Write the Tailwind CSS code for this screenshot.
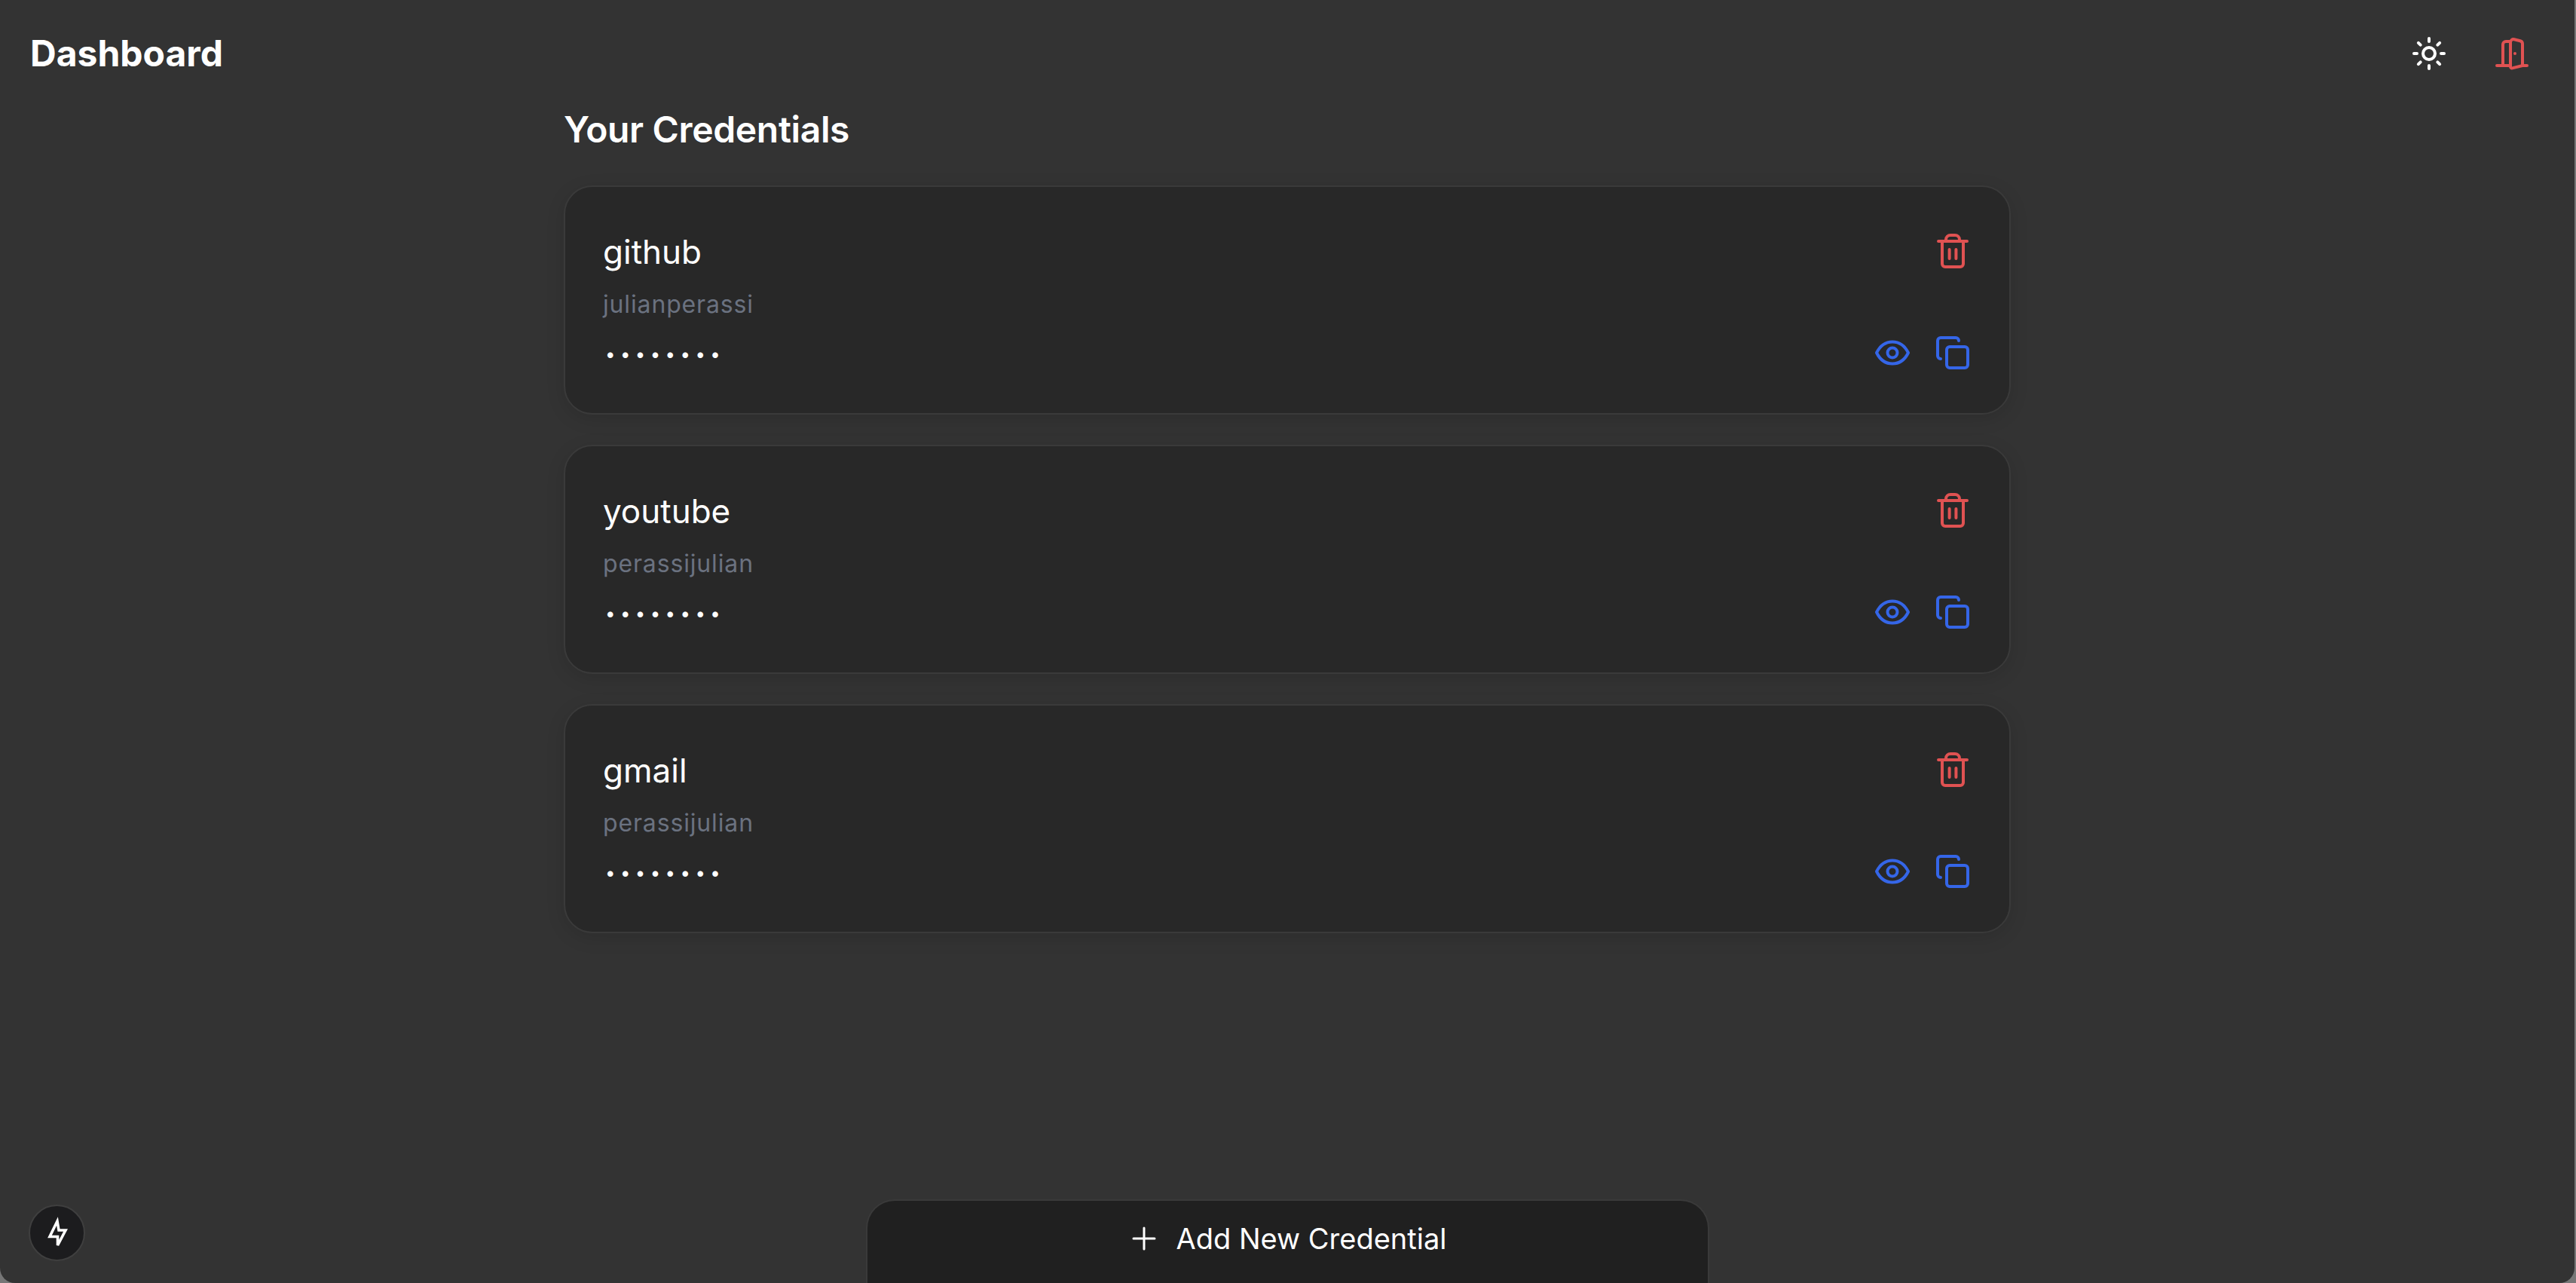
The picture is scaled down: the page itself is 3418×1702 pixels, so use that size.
<!DOCTYPE html>
<html lang="en">
<head>
  <meta charset="UTF-8" />
  <title>Dashboard</title>
  <script src="https://cdn.jsdelivr.net/npm/@tailwindcss/browser@4"></script>
</head>
<body class="h-screen overflow-hidden bg-[#767676] font-[Inter,sans-serif] text-white antialiased">
<div class="relative h-full w-[3416px] overflow-hidden rounded-b-[20px] bg-[#333333]">

  <header class="flex h-[142px] items-center justify-between pl-[40px] pr-[59px]">
    <h1 class="text-[48px] font-bold leading-none">Dashboard</h1>
    <div class="flex items-center gap-[62px]">
      <svg class="h-[48px] w-[48px] text-white" viewBox="0 0 24 24" fill="none" stroke="currentColor" stroke-width="2" stroke-linecap="round" stroke-linejoin="round">
        <circle cx="12" cy="12" r="4" />
        <path d="M12 2v2M12 20v2M4.93 4.93l1.41 1.41M17.66 17.66l1.41 1.41M2 12h2M20 12h2M6.34 17.66l-1.41 1.41M19.07 4.93l-1.41 1.41" />
      </svg>
      <svg class="h-[48px] w-[48px] -scale-x-100 text-[#e05252]" viewBox="0 0 24 24" fill="none" stroke="currentColor" stroke-width="2" stroke-linecap="round" stroke-linejoin="round">
        <path d="M13 4h3a2 2 0 0 1 2 2v14M2 20h3M13 20h9M10 12v.01M13 4.562v16.157a1 1 0 0 1-1.242.97L5 20V5.562a2 2 0 0 1 1.515-1.94l4-1A2 2 0 0 1 13 4.561Z" />
      </svg>
    </div>
  </header>

  <main class="mx-auto w-[1920px]">
    <h2 class="mb-[44px] text-[48px] font-semibold leading-[60px] tracking-[-0.35px]">Your Credentials</h2>

    <div class="flex flex-col gap-[40px]">
      <!-- github -->
      <div class="flex h-[304px] justify-between rounded-[38px] border-2 border-[#3a3a3a] bg-[#282828] pb-[56px] pl-[50px] pr-[51px] pt-[60px] shadow-[0_6px_24px_rgba(0,0,0,0.12)]">
        <div class="flex flex-col">
          <span class="text-[44px] leading-[52px]">github</span>
          <span class="mt-[24px] text-[32px] leading-[40px] tracking-[0.85px] text-[#6b7280]">julianperassi</span>
          <span class="ml-[3px] mt-[26px] text-[24px] leading-[40px] tracking-[6.4px]">••••••••</span>
        </div>
        <div class="flex flex-col items-end justify-between">
          <svg class="mt-[1px] h-[48px] w-[48px] text-[#e05252]" viewBox="0 0 24 24" fill="none" stroke="currentColor" stroke-width="2" stroke-linecap="round" stroke-linejoin="round">
            <path d="M2.5 5.5h19M5 5.5v15a2 2 0 0 0 2 2h10a2 2 0 0 0 2-2v-15M7.5 5.5v-1a3 3 0 0 1 3-3h3a3 3 0 0 1 3 3v1M9.8 11v6M14.2 11v6" />
          </svg>
          <div class="flex items-center gap-[32px]">
            <svg class="h-[48px] w-[48px] text-[#3566e8]" viewBox="0 0 24 24" fill="none" stroke="currentColor" stroke-width="2" stroke-linecap="round" stroke-linejoin="round">
              <path d="M1.5 12C3.5 8 7 4.75 12 4.75S20.5 8 22.5 12c-2 4-5.5 7.25-10.5 7.25S3.5 16 1.5 12Z" />
              <circle cx="12" cy="12" r="3.25" />
            </svg>
            <svg class="h-[48px] w-[48px] text-[#3566e8]" viewBox="0 0 24 24" fill="none" stroke="currentColor" stroke-width="2" stroke-linecap="round" stroke-linejoin="round">
              <rect x="8" y="8" width="14" height="14" rx="2" />
              <path d="M4 16c-1.1 0-2-.9-2-2V4c0-1.1.9-2 2-2h10c1.1 0 2 .9 2 2" />
            </svg>
          </div>
        </div>
      </div>

      <!-- youtube -->
      <div class="flex h-[304px] justify-between rounded-[38px] border-2 border-[#3a3a3a] bg-[#282828] pb-[56px] pl-[50px] pr-[51px] pt-[60px] shadow-[0_6px_24px_rgba(0,0,0,0.12)]">
        <div class="flex flex-col">
          <span class="text-[44px] leading-[52px]">youtube</span>
          <span class="mt-[24px] text-[32px] leading-[40px] tracking-[0.85px] text-[#6b7280]">perassijulian</span>
          <span class="ml-[3px] mt-[26px] text-[24px] leading-[40px] tracking-[6.4px]">••••••••</span>
        </div>
        <div class="flex flex-col items-end justify-between">
          <svg class="mt-[1px] h-[48px] w-[48px] text-[#e05252]" viewBox="0 0 24 24" fill="none" stroke="currentColor" stroke-width="2" stroke-linecap="round" stroke-linejoin="round">
            <path d="M2.5 5.5h19M5 5.5v15a2 2 0 0 0 2 2h10a2 2 0 0 0 2-2v-15M7.5 5.5v-1a3 3 0 0 1 3-3h3a3 3 0 0 1 3 3v1M9.8 11v6M14.2 11v6" />
          </svg>
          <div class="flex items-center gap-[32px]">
            <svg class="h-[48px] w-[48px] text-[#3566e8]" viewBox="0 0 24 24" fill="none" stroke="currentColor" stroke-width="2" stroke-linecap="round" stroke-linejoin="round">
              <path d="M1.5 12C3.5 8 7 4.75 12 4.75S20.5 8 22.5 12c-2 4-5.5 7.25-10.5 7.25S3.5 16 1.5 12Z" />
              <circle cx="12" cy="12" r="3.25" />
            </svg>
            <svg class="h-[48px] w-[48px] text-[#3566e8]" viewBox="0 0 24 24" fill="none" stroke="currentColor" stroke-width="2" stroke-linecap="round" stroke-linejoin="round">
              <rect x="8" y="8" width="14" height="14" rx="2" />
              <path d="M4 16c-1.1 0-2-.9-2-2V4c0-1.1.9-2 2-2h10c1.1 0 2 .9 2 2" />
            </svg>
          </div>
        </div>
      </div>

      <!-- gmail -->
      <div class="flex h-[304px] justify-between rounded-[38px] border-2 border-[#3a3a3a] bg-[#282828] pb-[56px] pl-[50px] pr-[51px] pt-[60px] shadow-[0_6px_24px_rgba(0,0,0,0.12)]">
        <div class="flex flex-col">
          <span class="text-[44px] leading-[52px]">gmail</span>
          <span class="mt-[24px] text-[32px] leading-[40px] tracking-[0.85px] text-[#6b7280]">perassijulian</span>
          <span class="ml-[3px] mt-[26px] text-[24px] leading-[40px] tracking-[6.4px]">••••••••</span>
        </div>
        <div class="flex flex-col items-end justify-between">
          <svg class="mt-[1px] h-[48px] w-[48px] text-[#e05252]" viewBox="0 0 24 24" fill="none" stroke="currentColor" stroke-width="2" stroke-linecap="round" stroke-linejoin="round">
            <path d="M2.5 5.5h19M5 5.5v15a2 2 0 0 0 2 2h10a2 2 0 0 0 2-2v-15M7.5 5.5v-1a3 3 0 0 1 3-3h3a3 3 0 0 1 3 3v1M9.8 11v6M14.2 11v6" />
          </svg>
          <div class="flex items-center gap-[32px]">
            <svg class="h-[48px] w-[48px] text-[#3566e8]" viewBox="0 0 24 24" fill="none" stroke="currentColor" stroke-width="2" stroke-linecap="round" stroke-linejoin="round">
              <path d="M1.5 12C3.5 8 7 4.75 12 4.75S20.5 8 22.5 12c-2 4-5.5 7.25-10.5 7.25S3.5 16 1.5 12Z" />
              <circle cx="12" cy="12" r="3.25" />
            </svg>
            <svg class="h-[48px] w-[48px] text-[#3566e8]" viewBox="0 0 24 24" fill="none" stroke="currentColor" stroke-width="2" stroke-linecap="round" stroke-linejoin="round">
              <rect x="8" y="8" width="14" height="14" rx="2" />
              <path d="M4 16c-1.1 0-2-.9-2-2V4c0-1.1.9-2 2-2h10c1.1 0 2 .9 2 2" />
            </svg>
          </div>
        </div>
      </div>
    </div>
  </main>

  <!-- add button sits on the bottom edge -->
  <button class="absolute bottom-0 left-[1149px] flex h-[111px] w-[1119px] items-start justify-center gap-[27px] rounded-t-[38px] border-2 border-b-0 border-[#3a3a3a] bg-[#202020] pl-[4px] pt-[27px] text-[38px] leading-[46px] text-white">
    <svg class="mt-[7px] h-[32px] w-[32px]" viewBox="0 0 32 32" fill="none" stroke="currentColor" stroke-width="3" stroke-linecap="round">
      <path d="M16 2v28M2 16h28" />
    </svg>
    Add New Credential
  </button>

  <!-- dev indicator -->
  <div class="absolute bottom-[29px] left-[38px] h-[75px] w-[75px] rounded-full border-2 border-[#3f3f3f] bg-[#1c1c1e]">
    <svg class="h-full w-full" viewBox="0 0 71 71" fill="none" stroke="#ffffff" stroke-width="3.6" stroke-linejoin="miter">
      <path d="M36 20 L26 40.5 H36.5 V52 L47 32 H38 Z" />
    </svg>
  </div>
</div>
</body>
</html>
